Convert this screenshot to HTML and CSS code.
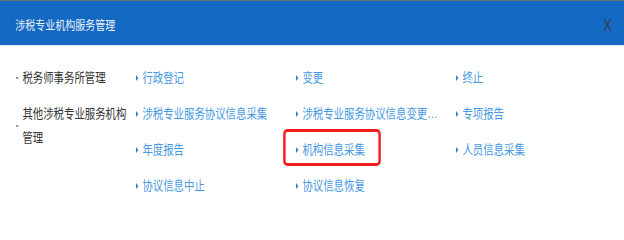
FILE: index.html
```html
<!DOCTYPE html>
<html lang="zh-CN">
<head>
<meta charset="utf-8">
<title>涉税专业机构服务管理</title>
<link rel="stylesheet" href="styles.css">
</head>
<body>
<div class="page">
  <div class="header">
    <span class="title">涉税专业机构服务管理</span>
    <span class="close">X</span>
  </div>
  <div class="content">
    <ul class="side">
      <li class="side-item"><i class="dot"></i><span class="side-text">税务师事务所管理</span></li>
      <li class="side-item"><i class="dot"></i><span class="side-text">其他涉税专业服务机构管理</span></li>
    </ul>
    <div class="grid">
      <a class="link"><i class="tri"></i><span class="label">行政登记</span></a>
      <a class="link"><i class="tri"></i><span class="label">变更</span></a>
      <a class="link"><i class="tri"></i><span class="label">终止</span></a>
      <a class="link"><i class="tri"></i><span class="label">涉税专业服务协议信息采集</span></a>
      <a class="link"><i class="tri"></i><span class="label">涉税专业服务协议信息变更采集</span></a>
      <a class="link"><i class="tri"></i><span class="label">专项报告</span></a>
      <a class="link"><i class="tri"></i><span class="label">年度报告</span></a>
      <a class="link marked"><i class="tri"></i><span class="label">机构信息采集</span><span class="mark"></span></a>
      <a class="link"><i class="tri"></i><span class="label">人员信息采集</span></a>
      <a class="link"><i class="tri"></i><span class="label">协议信息中止</span></a>
      <a class="link"><i class="tri"></i><span class="label">协议信息恢复</span></a>
    </div>
  </div>
</div>
</body>
</html>
```
FILE: styles.css
```css
html, body {
  margin: 0;
  padding: 0;
  background: #ffffff;
  overflow: hidden;
}

.page {
  width: 780px;
  height: 214px;
  transform: scaleX(0.8);
  transform-origin: 0 0;
  font-family: "Liberation Sans", "Noto Sans CJK SC", sans-serif;
  background: #ffffff;
}

.header {
  box-sizing: border-box;
  height: 46px;
  border-top: 1px solid #6a6d72;
  border-bottom: 1px solid #dfe5ec;
  background: #1469c2;
  padding: 6px 15px 0 19px;
  display: flex;
  align-items: center;
  justify-content: space-between;
}

.title {
  color: #eef3fa;
  font-size: 12.5px;
  line-height: 20px;
}

.close {
  color: #34404f;
  font-size: 17px;
  line-height: 20px;
}

.content {
  display: flex;
  padding: 20px 0 0 20px;
}

.side {
  list-style: none;
  margin: 0;
  padding: 0;
  width: 150px;
}

.side-item {
  display: flex;
  align-items: center;
  gap: 5px;
  margin-bottom: 12px;
}

.dot {
  display: block;
  width: 3px;
  height: 2px;
  background: #9a9a9a;
}

.side-text {
  width: 140px;
  color: #333333;
  font-size: 13px;
  line-height: 24px;
}

.grid {
  display: grid;
  grid-template-columns: repeat(3, 200px);
  grid-auto-rows: 24px;
  row-gap: 12px;
}

.link {
  position: relative;
  display: flex;
  align-items: center;
  gap: 5px;
  color: #4598e2;
  font-size: 13px;
  line-height: 24px;
}

.tri {
  display: block;
  width: 0;
  height: 0;
  border-left: 3px solid #2d7fd2;
  border-top: 3px solid transparent;
  border-bottom: 3px solid transparent;
}

.label {
  max-width: 172px;
  white-space: nowrap;
  overflow: hidden;
  text-overflow: ellipsis;
}

.mark {
  position: absolute;
  left: -16px;
  top: -9px;
  width: 122px;
  height: 37px;
  box-sizing: border-box;
  border-style: solid;
  border-color: #f31c1c;
  border-width: 3px 3.75px;
  border-radius: 5px;
}
```
